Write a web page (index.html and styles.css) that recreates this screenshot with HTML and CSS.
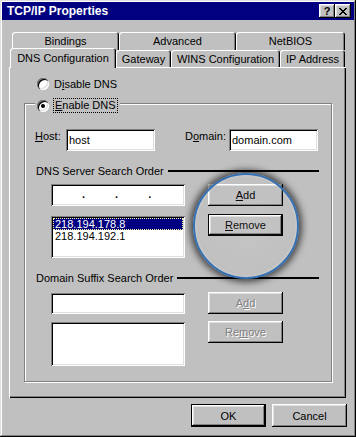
FILE: index.html
```html
<!DOCTYPE html>
<html lang="en">
<head>
    <meta charset="UTF-8">
    <title>TCP/IP Properties</title>
    <link rel="stylesheet" href="styles.css">
</head>
<body>
    <div class="window">
        <div class="titlebar">
            <span class="title">TCP/IP Properties</span>
            <div class="title-buttons">
                <button class="title-btn help">?</button>
                <button class="title-btn close">
                    <svg width="8" height="7" viewBox="0 0 8 7">
                        <path d="M0 0h2v1h1v1h2v-1h1v-1h2v1h-1v1h-1v1h-1v1h1v1h1v1h1v1h-2v-1h-1v-1h-2v1h-1v1h-2v-1h1v-1h1v-1h1v-1h-1v-1h-1v-1h-1z" fill="#000"/>
                    </svg>
                </button>
            </div>
        </div>

        <div class="tabs">
            <div class="tab-row tab-row-back">
                <div class="tab tab-bindings">Bindings</div>
                <div class="tab tab-advanced">Advanced</div>
                <div class="tab tab-netbios">NetBIOS</div>
            </div>
            <div class="tab-row tab-row-front">
                <div class="tab tab-dns active">DNS Configuration</div>
                <div class="tab tab-gateway">Gateway</div>
                <div class="tab tab-wins">WINS Configuration</div>
                <div class="tab tab-ip">IP Address</div>
            </div>
        </div>

        <div class="panel">
            <div class="option">
                <span class="radio"></span>
                <span>D<u>i</u>sable DNS</span>
            </div>

            <div class="group">
                <div class="group-legend">
                    <span class="radio checked"></span>
                    <span class="focus-label"><u>E</u>nable DNS</span>
                </div>

                <div class="field-row">
                    <span class="field-label label-host"><u>H</u>ost:</span>
                    <div class="textbox">host</div>
                    <span class="field-label label-domain">D<u>o</u>main:</span>
                    <div class="textbox">domain.com</div>
                </div>

                <div class="section-title">DNS Server Search Order</div>
                <div class="list-area">
                    <div class="list-col">
                        <div class="ipbox"><span>.</span><span>.</span><span>.</span></div>
                        <div class="listbox">
                            <div class="list-item selected">218.194.178.8</div>
                            <div class="list-item">218.194.192.1</div>
                        </div>
                    </div>
                    <div class="btn-col">
                        <button class="btn"><u>A</u>dd</button>
                        <button class="btn btn-default btn-second"><u>R</u>emove</button>
                    </div>
                </div>

                <div class="section-title">Domain Suffix Search Order</div>
                <div class="list-area suffix">
                    <div class="list-col">
                        <div class="textbox textbox-wide"></div>
                        <div class="listbox listbox-tall"></div>
                    </div>
                    <div class="btn-col">
                        <button class="btn" disabled>A<u>d</u>d</button>
                        <button class="btn btn-second" disabled>Re<u>m</u>ove</button>
                    </div>
                </div>
            </div>
        </div>

        <div class="footer">
            <button class="btn btn-footer btn-default">OK</button>
            <button class="btn btn-footer">Cancel</button>
        </div>

        <div class="lens"></div>
    </div>
</body>
</html>
```

FILE: styles.css
```css
* {
    box-sizing: border-box;
}
body {
    margin: 0;
    background-color: #c0c0c0;
    font-family: "Liberation Sans", Arial, sans-serif;
    font-size: 11px;
    color: #000;
}
u {
    text-decoration-thickness: 1px;
    text-underline-offset: 1px;
}
.window {
    position: relative;
    width: 356px;
    height: 437px;
    padding: 2px;
    background-color: #c0c0c0;
    box-shadow: inset -1px -1px #000, inset 1px 1px #dfdfdf, inset -2px -2px #808080, inset 2px 2px #fff;
}

/* title bar */
.titlebar {
    height: 18px;
    display: flex;
    align-items: center;
    justify-content: space-between;
    padding: 0 3px 0 5px;
    background-color: #000080;
    color: #fff;
}
.title {
    font-size: 12px;
    font-weight: bold;
}
.title-buttons {
    display: flex;
}
.title-btn {
    width: 16px;
    height: 14px;
    display: flex;
    align-items: center;
    justify-content: center;
    padding: 0;
    border: 0;
    background-color: #c0c0c0;
    box-shadow: inset -1px -1px #000, inset 1px 1px #fff, inset -2px -2px #808080, inset 2px 2px #dfdfdf;
    font-family: inherit;
    font-size: 11px;
    font-weight: bold;
    color: #000;
}

/* tabs */
.tabs {
    width: 337px;
    margin: 12px 0 0 7px;
}
.tab-row {
    display: flex;
}
.tab-row-back {
    height: 18px;
    padding-left: 3px;
}
.tab-row-front {
    height: 17px;
    padding-left: 1px;
    align-items: flex-end;
}
.tab {
    height: 100%;
    display: flex;
    align-items: center;
    justify-content: center;
    background-color: #c0c0c0;
    border-radius: 3px 3px 0 0;
    box-shadow: inset 1px 1px #fff, inset -1px 0 #000, inset -2px 0 #808080;
}
.tab.active {
    position: relative;
    z-index: 1;
    height: 20px;
    margin-bottom: -1px;
}
.tab-bindings { width: 107px; }
.tab-advanced { width: 117px; }
.tab-netbios { width: 109px; }
.tab-dns { width: 106px; }
.tab-gateway { width: 55px; }
.tab-wins { width: 109px; }
.tab-ip { width: 65px; }

/* panel */
.panel {
    width: 337px;
    height: 331px;
    margin-left: 7px;
    padding: 10px 15px 0;
    box-shadow: inset 1px 1px #fff, inset -1px -1px #000, inset -2px -2px #808080;
}
.option {
    height: 13px;
    display: flex;
    align-items: center;
    gap: 5px;
    margin-left: 13px;
}
.radio {
    width: 12px;
    height: 12px;
    display: flex;
    align-items: center;
    justify-content: center;
    flex: 0 0 auto;
    border-radius: 50%;
    background-color: #fff;
    box-shadow: inset 1px 1px #808080, inset 2px 2px #000, inset -1px -1px #fff, inset -2px -2px #dfdfdf;
}
.radio.checked::after {
    content: "";
    width: 4px;
    height: 4px;
    border-radius: 50%;
    background-color: #000;
}

.group {
    width: 308px;
    height: 279px;
    margin-top: 13px;
    padding-right: 12px;
    border: 1px solid #808080;
    box-shadow: inset 1px 1px #fff, 1px 1px #fff;
}
.group-legend {
    width: fit-content;
    height: 15px;
    display: flex;
    align-items: center;
    gap: 4px;
    margin: -6px 0 0 10px;
    padding: 0 2px;
    background-color: #c0c0c0;
}
.focus-label {
    border: 1px dotted #000;
    padding: 0 1px;
    line-height: 13px;
}

.field-row {
    height: 22px;
    display: flex;
    margin-top: 16px;
    padding-left: 10px;
}
.field-label {
    line-height: 15px;
}
.label-host { width: 31px; }
.label-domain {
    width: 44px;
    margin-left: 30px;
}
.textbox {
    width: 89px;
    height: 22px;
    display: flex;
    align-items: center;
    padding-left: 3px;
    background-color: #fff;
    box-shadow: inset 1px 1px #808080, inset -1px -1px #fff, inset 2px 2px #000, inset -2px -2px #dfdfdf;
}
.textbox-wide {
    width: 134px;
    height: 21px;
    margin-top: 1px;
}

.section-title {
    height: 13px;
    display: flex;
    align-items: center;
    margin-top: 13px;
    padding-left: 11px;
    white-space: nowrap;
}
.section-title::after {
    content: "";
    flex: 1;
    height: 2px;
    margin-left: 4px;
    background-color: #000;
}

.list-area {
    display: flex;
    margin-top: 7px;
    padding-left: 26px;
}
.list-area.suffix {
    margin-top: 8px;
}
.list-col {
    width: 134px;
    display: flex;
    flex-direction: column;
}
.btn-col {
    width: 75px;
    display: flex;
    flex-direction: column;
    margin-left: 23px;
}
.ipbox {
    height: 22px;
    display: flex;
    align-items: center;
    gap: 30px;
    padding: 0 0 3px 31px;
    background-color: #fff;
    font-weight: bold;
    box-shadow: inset 1px 1px #808080, inset -1px -1px #fff, inset 2px 2px #000, inset -2px -2px #dfdfdf;
}
.listbox {
    height: 42px;
    margin-top: 10px;
    padding: 2px;
    background-color: #fff;
    box-shadow: inset 1px 1px #808080, inset -1px -1px #fff, inset 2px 2px #000, inset -2px -2px #dfdfdf;
}
.listbox-tall {
    height: 44px;
    margin-top: 8px;
}
.list-item {
    line-height: 12px;
    padding-left: 2px;
}
.list-item.selected {
    background-color: #000080;
    color: #fff;
    outline: 1px dotted #ffffa0;
    outline-offset: -1px;
}

/* buttons */
.btn {
    width: 75px;
    height: 22px;
    padding: 0;
    border: 0;
    background-color: #c0c0c0;
    box-shadow: inset -1px -1px #000, inset 1px 1px #fff, inset -2px -2px #808080, inset 2px 2px #dfdfdf;
    font-family: inherit;
    font-size: 11px;
    color: #000;
}
.btn-default {
    border: 1px solid #000;
}
.btn-second {
    margin-top: 8px;
}
.suffix .btn-second {
    margin-top: 7px;
}
.btn:disabled {
    color: #808080;
    text-shadow: 1px 1px #fff;
}
.footer {
    display: flex;
    justify-content: flex-end;
    gap: 6px;
    margin-top: 6px;
    padding-right: 7px;
}
.btn-footer {
    height: 23px;
}

/* magnifier ring over the buttons */
.lens {
    position: absolute;
    left: 193px;
    top: 173px;
    width: 106px;
    height: 106px;
    border: 2px solid #3470b2;
    border-radius: 50%;
    background: radial-gradient(circle, rgba(255, 255, 255, 0.08), rgba(255, 255, 255, 0) 72%);
    box-shadow: 0 0 7px 3px rgba(0, 0, 0, 0.65), inset 0 0 3px rgba(255, 255, 255, 0.4);
    pointer-events: none;
}
```
